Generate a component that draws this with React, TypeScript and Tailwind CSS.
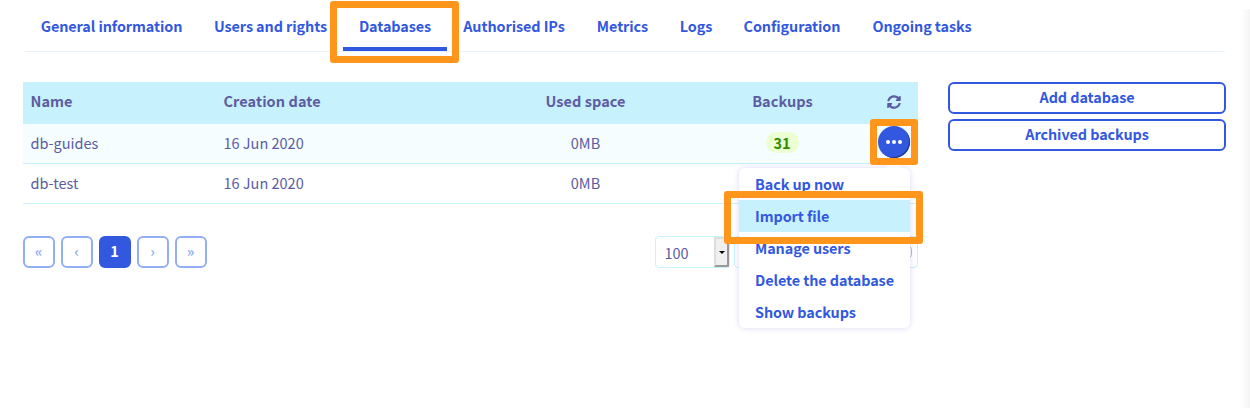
import React from "react";
import { FaSyncAlt } from "react-icons/fa";

const tabs = [
  { label: "General information", w: "w-[173px]" },
  { label: "Users and rights", w: "w-[145px]" },
  { label: "Databases", w: "w-[104px]", active: true },
  { label: "Authorised IPs", w: "w-[134px]" },
  { label: "Metrics", w: "w-[83px]" },
  { label: "Logs", w: "w-[64px]" },
  { label: "Configuration", w: "w-[128px]" },
  { label: "Ongoing tasks", w: "w-[132px]" },
];

const rows = [
  { name: "db-guides", date: "16 Jun 2020", used: "0MB", backups: 31, selected: true },
  { name: "db-test", date: "16 Jun 2020", used: "0MB" },
];

const menu = ["Back up now", "Import file", "Manage users", "Delete the database", "Show backups"];

function Highlight({ className }: { className: string }) {
  return <div className={`pointer-events-none absolute z-20 rounded-[3px] border-[7px] border-[#ff961b] ${className}`} />;
}

function Tabs() {
  return (
    <nav className="ml-[25px] flex h-[52px] w-[1200px] border-b border-[#e8f3fb] tracking-[-0.08px]">
      {tabs.map((t) => (
        <a key={t.label} className={`relative flex h-[51px] shrink-0 justify-center whitespace-nowrap pt-[16px] font-bold text-[#3358e0] ${t.w} ${t.active ? "border-b-4 border-[#3358e0]" : ""}`}>
          {t.label}
          {t.active && <Highlight className="-left-[13px] top-[1px] h-[62px] w-[129px]" />}
        </a>
      ))}
    </nav>
  );
}

function ActionMenu() {
  return (
    <div className="absolute right-[8px] top-[44px] z-10 h-[160px] w-[171px] rounded-md bg-white shadow-[0_0_6px_rgba(80,60,200,0.2)]">
      <span className="absolute -top-[5px] right-[10px] size-[12px] rotate-45 bg-white" />
      <ul className="relative tracking-[-0.08px] text-[14.4px]">
        {menu.map((m, i) => (
          <li key={m} className={`flex h-8 items-center whitespace-nowrap pl-4 font-bold text-[#3358e0] ${i === 1 ? "bg-[#c8f1fe]" : ""}`}>
            {m}
          </li>
        ))}
      </ul>
      <Highlight className="-left-[15px] top-[23px] h-[53px] w-[199px]" />
    </div>
  );
}

function Table() {
  const grid = "grid grid-cols-[193px_273px_194px_200px_35px] items-center";
  return (
    <div className="text-[14.5px] text-[#5c5ca2]">
      <div className={`${grid} h-[42px] bg-[#c8f1fe] pb-[5px] font-bold tracking-[0.07px]`}>
        <span className="pl-[7.5px]">Name</span>
        <span className="pl-[7.5px]">Creation date</span>
        <span className="pr-px text-center">Used space</span>
        <span className="pr-px text-center">Backups</span>
        <span className="flex pl-[4px] pt-[2px]"><FaSyncAlt size={14} /></span>
      </div>
      {rows.map((r) => (
        <div key={r.name} className={`${grid} relative h-[40px] border-b border-[#c8f1fe] pb-[2px] ${r.selected ? "bg-[#f5fdff]" : ""}`}>
          <span className="pl-[7.5px]">{r.name}</span>
          <span className="pl-[7.5px]">{r.date}</span>
          <span className="pr-px text-center">{r.used}</span>
          <span className="flex justify-center pr-[2px]">
            {r.backups && <b className="flex h-[21px] w-[33px] items-center justify-center rounded-full bg-[#ecffd2] text-[#2f8d04]">{r.backups}</b>}
          </span>
          {r.selected && (
            <>
              <button className="absolute right-[8px] top-[2px] flex size-8 items-center justify-center gap-[2px] rounded-full bg-[#3358e0] pr-px shadow-[inset_-1px_-1px_0_#1e3a8a]">
                <i className="size-1 rounded-full bg-white" />
                <i className="size-1 rounded-full bg-white" />
                <i className="size-1 rounded-full bg-white" />
              </button>
              <Highlight className="-top-[5px] right-0 h-[46px] w-[48px]" />
              <ActionMenu />
            </>
          )}
        </div>
      ))}
    </div>
  );
}

function Pager() {
  return (
    <div className="mt-8 flex h-8 justify-between">
      <div className="flex gap-[6px]">
        {["«", "‹", "1", "›", "»"].map((p) => (
          <button key={p} className={`flex size-8 items-center justify-center rounded-md border-2 font-bold ${p === "1" ? "border-[#3358e0] bg-[#3358e0] pb-[2px] pr-px text-white" : "border-[#92aef4] pb-[2px] pr-px text-[#92aef4]"}`}>
            {p}
          </button>
        ))}
      </div>
      <div className="flex gap-1 text-[14.5px] text-[#5c5ca2]">
        <div className="flex w-[75px] items-stretch justify-between rounded-sm border border-[#c8f1fe]">
          <span className="pl-[8.5px] pt-[6px]">100</span>
          <span className="flex w-[15px] items-center justify-center border-2 border-b-[#999] border-l-[#ddd] border-r-[#999] border-t-[#ddd] bg-[#f0f0f0]">
            <i className="border-x-[3px] border-t-[3px] border-x-transparent border-t-black" />
          </span>
        </div>
        <div className="flex w-[184px] items-center justify-end rounded-sm border border-[#c8f1fe] pr-[5px]">
          <span className="h-[14px] w-3 rounded-[5px] border border-[#bbb]" />
        </div>
      </div>
    </div>
  );
}

export default function App() {
  return (
    <div className="relative h-[408px] w-[1250px] overflow-hidden bg-white font-['Noto_Sans_CJK_JP','Noto_Sans_CJK_SC',sans-serif] text-[14.4px] leading-[20px]">
      <Tabs />
      <main className="ml-[23px] mt-[30px] flex gap-[30px]">
        <div className="w-[895px]">
          <Table />
          <Pager />
        </div>
        <aside className="flex w-[278px] flex-col gap-[5px] tracking-[-0.07px]">
          {["Add database", "Archived backups"].map((b) => (
            <button key={b} className="flex h-8 items-center justify-center rounded-md border-2 border-[#3358e0] pb-[2px] font-bold text-[#3358e0]">
              {b}
            </button>
          ))}
        </aside>
      </main>
      <div className="absolute bottom-0 right-0 top-[9px] w-[9px] bg-gradient-to-r from-white to-[#f5f5f5]" />
    </div>
  );
}
